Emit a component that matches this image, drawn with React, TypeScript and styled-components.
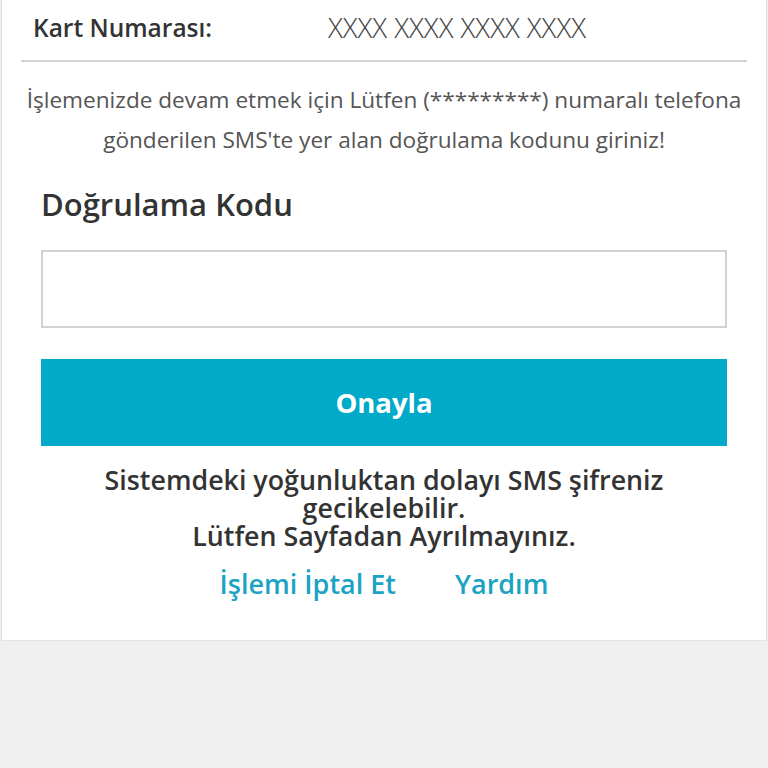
import React from "react";
import styled, { createGlobalStyle } from "styled-components";

const GlobalStyle = createGlobalStyle`
  html, body {
    margin: 0;
    padding: 0;
    background: #efefef;
    font-family: "Open Sans", "Noto Sans", sans-serif;
  }
`;

const Card = styled.div`
  background: #ffffff;
  margin: 0 1px;
  border: 1px solid #e2e2e2;
  border-top: 0;
  padding: 0 19px 41px;
`;

const InfoRow = styled.div`
  display: flex;
  align-items: center;
  box-sizing: border-box;
  height: 62px;
  padding: 0 12px 6px;
  border-bottom: 2px solid #d4d4d4;
`;

const InfoLabel = styled.span`
  width: 295px;
  font-size: 24.5px;
  font-weight: 600;
  color: #333333;
`;

const InfoValue = styled.span`
  font-size: 27.5px;
  font-weight: 300;
  color: #444444;
`;

const Hint = styled.p`
  margin: 18px 0 0;
  text-align: center;
  font-size: 22.6px;
  line-height: 40px;
  color: #555555;
  white-space: nowrap;
`;

const Form = styled.div`
  padding: 0 20px;
`;

const FieldLabel = styled.h2`
  margin: 24px 0 26px;
  font-size: 31px;
  line-height: 40px;
  font-weight: 600;
  color: #333333;
`;

const CodeInput = styled.input`
  display: block;
  box-sizing: border-box;
  width: 100%;
  height: 78px;
  margin: 0;
  border: 2px solid #d2d2d2;
  background: #ffffff;
  font-size: 24px;
  outline: none;
`;

const SubmitButton = styled.button`
  display: block;
  width: 100%;
  height: 87px;
  margin-top: 31px;
  border: 0;
  background: #00aac8;
  color: #ffffff;
  font-family: inherit;
  font-size: 27.5px;
  font-weight: 700;
`;

const Notice = styled.p`
  margin: 20px 0 0;
  text-align: center;
  font-size: 26.8px;
  line-height: 28px;
  font-weight: 600;
  color: #333333;
`;

const Links = styled.div`
  display: flex;
  justify-content: center;
  gap: 59px;
  margin-top: 19px;
`;

const TextLink = styled.a`
  font-size: 27px;
  line-height: 30px;
  font-weight: 600;
  color: #1ba3c3;
  text-decoration: none;
`;

export default function App() {
  return (
    <>
      <GlobalStyle />
      <Card>
        <InfoRow>
          <InfoLabel>Kart Numarası:</InfoLabel>
          <InfoValue>XXXX XXXX XXXX XXXX</InfoValue>
        </InfoRow>
        <Hint>
          İşlemenizde devam etmek için Lütfen (*********) numaralı telefona
          <br />
          gönderilen SMS'te yer alan doğrulama kodunu giriniz!
        </Hint>
        <Form>
          <FieldLabel>Doğrulama Kodu</FieldLabel>
          <CodeInput type="text" />
          <SubmitButton>Onayla</SubmitButton>
          <Notice>
            Sistemdeki yoğunluktan dolayı SMS şifreniz
            <br />
            gecikelebilir.
            <br />
            Lütfen Sayfadan Ayrılmayınız.
          </Notice>
          <Links>
            <TextLink href="#">İşlemi İptal Et</TextLink>
            <TextLink href="#">Yardım</TextLink>
          </Links>
        </Form>
      </Card>
    </>
  );
}
